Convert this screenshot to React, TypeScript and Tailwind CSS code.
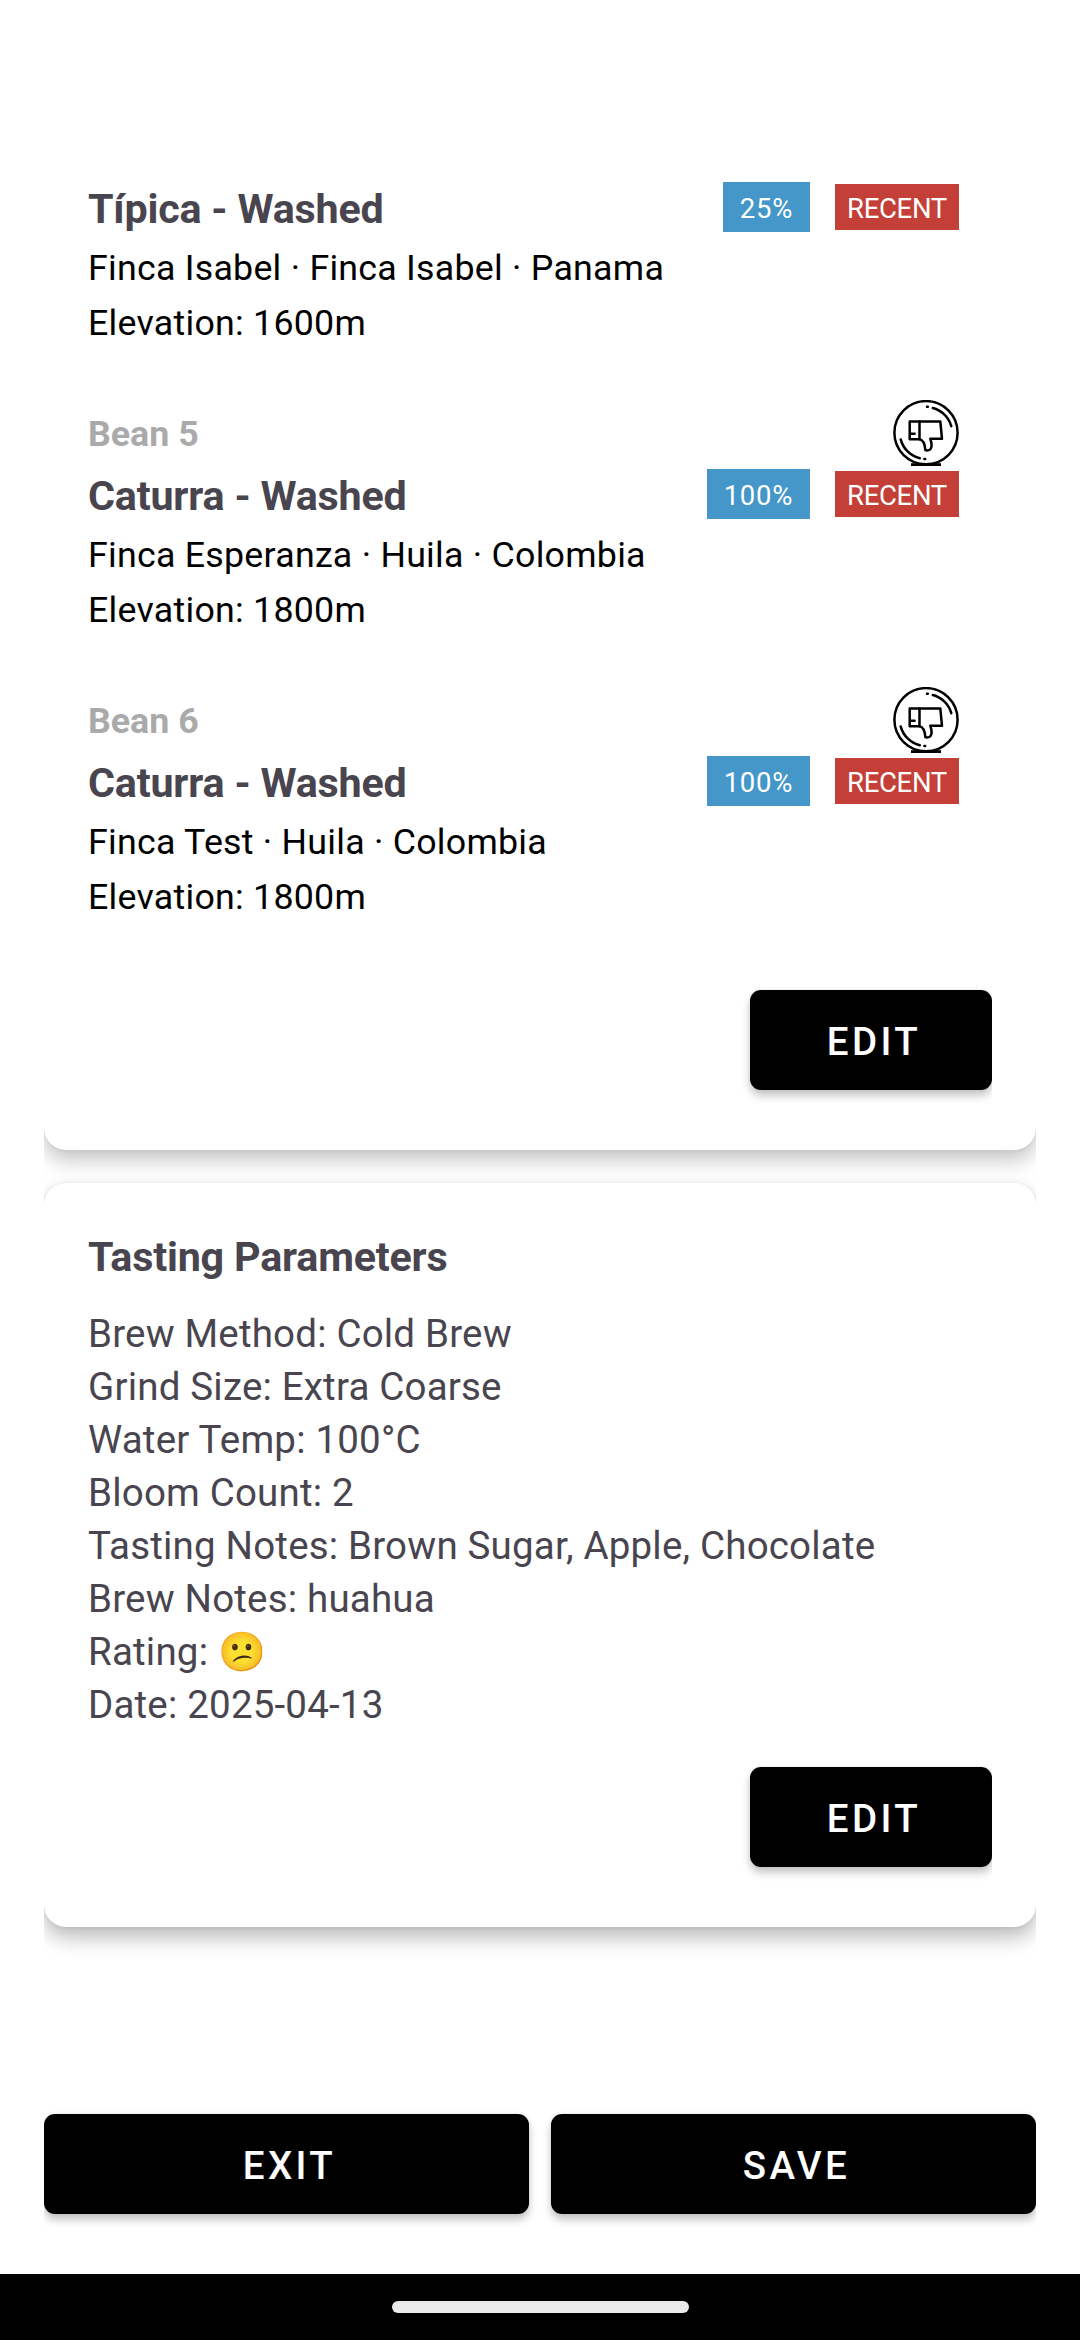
type Bean = { label?: string; name: string; percent: string; origin: string; elevation: string };

const beans: Bean[] = [
  { name: "Típica - Washed", percent: "25%", origin: "Finca Isabel · Finca Isabel · Panama", elevation: "1600m" },
  { label: "Bean 5", name: "Caturra - Washed", percent: "100%", origin: "Finca Esperanza · Huila · Colombia", elevation: "1800m" },
  { label: "Bean 6", name: "Caturra - Washed", percent: "100%", origin: "Finca Test · Huila · Colombia", elevation: "1800m" },
];

const parameters = [
  "Brew Method: Cold Brew",
  "Grind Size: Extra Coarse",
  "Water Temp: 100°C",
  "Bloom Count: 2",
  "Tasting Notes: Brown Sugar, Apple, Chocolate",
  "Brew Notes: huahua",
  "Rating: 😕",
  "Date: 2025-04-13",
];

function ThumbsDown() {
  return (
    <svg viewBox="0 0 66 66" className="size-[66px]" fill="none" stroke="#000" strokeWidth="2.5" strokeLinecap="round" strokeLinejoin="round">
      <circle cx="33" cy="32.7" r="31.6" />
      <path d="M18 64.6H48" strokeWidth="2.8" strokeLinecap="butt" />
      <path d="M39.8 8A26 26 0 0 1 58.3 26.2M34 6.7h.8M7.7 39.4A26 26 0 0 0 26.8 58.2M31.4 59.1h.8" />
      <path d="M16.7 21.4h9.8v17.9h-9.8zM17 33.7h4.6" />
      <path d="M26.5 21.4h20.8L49 38.8H37.3C38.6 42.5 39.3 46 37.8 48.6C36.4 50.6 33.8 50.8 32.4 50.2C31.9 44.5 30.6 40 26.5 39.3" />
    </svg>
  );
}

function Button({ label, className = "" }: { label: string; className?: string }) {
  return (
    <button
      className={`flex h-[100px] items-center justify-center rounded-[11px] bg-black pt-[3px] pl-[6px] text-[38.5px] font-medium tracking-[3.4px] text-white shadow-[0_6px_9px_rgba(0,0,0,0.22),0_0_4px_rgba(0,0,0,0.08)] ${className}`}
    >
      {label}
    </button>
  );
}

function EditRow({ className }: { className: string }) {
  return (
    <div className={`flex justify-end overflow-x-clip ${className}`}>
      <Button label="EDIT" className="w-[242px]" />
    </div>
  );
}

function BeanItem({ bean }: { bean: Bean }) {
  return (
    <div className="pr-[33px]">
      {bean.label && (
        <div className="mb-[3px] flex h-[66px] items-center justify-between">
          <span className="pt-[4px] text-[35.75px] font-bold text-[#aaaaaa]">{bean.label}</span>
          <ThumbsDown />
        </div>
      )}
      <div className="mb-[9px] flex h-[50px] items-center">
        <h2 className="self-start text-[41.25px] leading-[54px] font-bold tracking-[-0.2px] whitespace-nowrap">{bean.name}</h2>
        <span className="ml-auto flex h-[50px] items-center bg-[#4497c8] px-[17px] pt-1 text-[27.5px] tracking-[0.7px] text-white">{bean.percent}</span>
        <span className="ml-[25px] flex h-[46px] w-[124px] items-center justify-center bg-[#c33f38] pt-1 text-[27.5px] tracking-[-0.3px] text-white">RECENT</span>
      </div>
      <p className="text-[35.75px] leading-[55px] tracking-[0.25px] whitespace-nowrap text-black">{bean.origin}</p>
      <p className="text-[35.75px] leading-[55px] tracking-[0.25px] whitespace-nowrap text-black">Elevation: {bean.elevation}</p>
    </div>
  );
}

export default function App() {
  return (
    <div className="flex h-[2340px] w-[1080px] flex-col overflow-hidden bg-white font-['Roboto',sans-serif] text-[#49454f]">
      <main className="mx-[44px] h-[2050px] overflow-x-clip">
        <section className="h-[1150px] rounded-b-[22px] bg-white px-[44px] pt-[182px] shadow-[0_11px_20px_rgba(0,0,0,0.22),0_0_5px_rgba(0,0,0,0.08)]">
          <div className="flex flex-col gap-[49px]">
            {beans.map((bean, i) => (
              <BeanItem key={i} bean={bean} />
            ))}
          </div>
          <EditRow className="mt-[65px]" />
        </section>
        <section className="mt-[33px] h-[744px] rounded-[22px] bg-white px-[44px] pt-[50px] shadow-[0_11px_20px_rgba(0,0,0,0.26),0_0_5px_rgba(0,0,0,0.08)]">
          <h2 className="text-[41.25px] leading-[48px] font-bold tracking-[-0.2px]">Tasting Parameters</h2>
          <ul className="mt-[26px]">
            {parameters.map((line) => (
              <li key={line} className="h-[53px] text-[38.5px] leading-[53px] tracking-[0.19px] whitespace-nowrap">
                {line}
              </li>
            ))}
          </ul>
          <EditRow className="mt-[36px]" />
        </section>
      </main>
      <footer className="mx-[44px] mt-[64px] flex gap-[22px] overflow-x-clip">
        <Button label="EXIT" className="flex-1" />
        <Button label="SAVE" className="flex-1" />
      </footer>
      <nav className="mt-[60px] flex h-[66px] justify-center bg-black pt-[27px]">
        <div className="h-[12px] w-[297px] rounded-full bg-[#ebebeb]" />
      </nav>
    </div>
  );
}
